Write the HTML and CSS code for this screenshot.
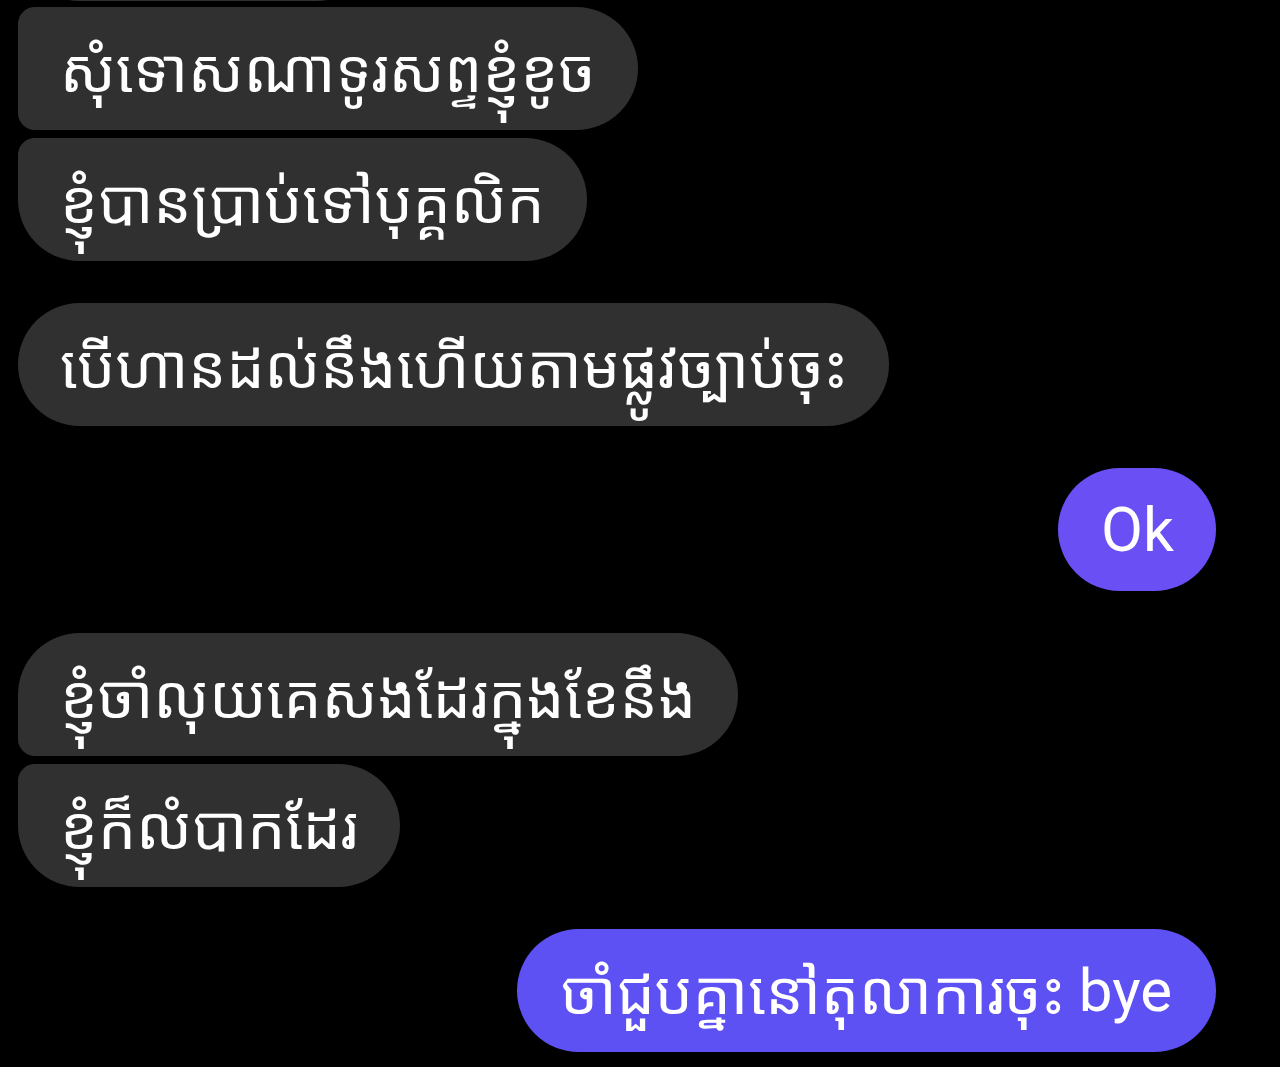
FILE: index.html
```html
<!DOCTYPE html>
<html lang="km">
<head>
<meta charset="utf-8">
<link rel="stylesheet" href="styles.css">
</head>
<body>
<div class="chat">
  <div class="msg in grp-last ghost"><span>ខ្ញុំសុំទោស</span></div>
  <div class="msg in grp-mid first">សុំទោសណាទូរសព្ទខ្ញុំខូច</div>
  <div class="msg in grp-last near">ខ្ញុំបានប្រាប់ទៅបុគ្គលិក</div>
  <div class="msg in solo far">បើហានដល់នឹងហើយតាមផ្លូវច្បាប់ចុះ</div>
  <div class="msg out ok far">Ok</div>
  <div class="msg in grp-first far">ខ្ញុំចាំលុយគេសងដែរក្នុងខែនឹង</div>
  <div class="msg in grp-last near">ខ្ញុំក៏លំបាកដែរ</div>
  <div class="msg out bye far">ចាំជួបគ្នានៅតុលាការចុះ <span class="lat">bye</span></div>
</div>
</body>
</html>
```
FILE: styles.css
```css
html, body {
  margin: 0;
  padding: 0;
  background: #000;
  height: 100%;
  overflow: hidden;
}
.chat {
  display: flex;
  flex-direction: column;
  align-items: flex-start;
  padding: 0 64px 0 18px;
}
.msg {
  box-sizing: border-box;
  height: 123px;
  display: flex;
  align-items: center;
  padding: 0 42px;
  color: #fff;
  font-family: "Noto Sans Khmer", "Khmer OS Battambang", "Khmer OS", "Noto Sans", sans-serif;
  font-size: 60px;
  white-space: nowrap;
  background: #303030;
  border-radius: 62px;
}
.ghost {
  margin-top: -122px;
  width: 360px;
}
.ghost span { visibility: hidden; }
.first { margin-top: 6px; }
.near { margin-top: 8px; }
.far { margin-top: 42px; }
.grp-mid { border-radius: 17px 62px 62px 17px; }
.grp-last { border-radius: 17px 62px 62px 62px; }
.grp-first { border-radius: 62px 62px 62px 17px; }
.out {
  align-self: flex-end;
  background: #6a4ff5;
}
.ok {
  font-family: Roboto, "Liberation Sans", Arial, sans-serif;
  font-size: 61px;
  padding: 0 42px 0 43px;
}
.bye {
  background: #5e51f3;
  padding: 0 44px;
}
.lat {
  font-family: Roboto, "Liberation Sans", Arial, sans-serif;
  margin-left: 14px;
}
```
